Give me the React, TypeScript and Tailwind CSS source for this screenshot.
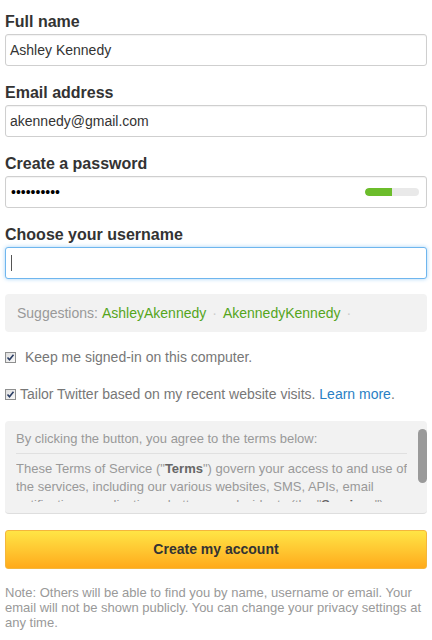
import React from 'react'

const font = { fontFamily: '"Liberation Sans", Arial, sans-serif' }

function Label({ children, className = '' }: { children: React.ReactNode; className?: string }) {
  return (
    <div className={`mb-[4px] text-[16px] font-bold leading-[17px] text-[#333] ${className}`}>
      {children}
    </div>
  )
}

function Field({ children, focused = false }: { children: React.ReactNode; focused?: boolean }) {
  return (
    <div
      className={
        focused
          ? 'flex h-[32px] items-center rounded-[3px] border border-[#6fb6ee] bg-white pl-[4px] pr-[7px] shadow-[0_0_4px_#a6d3f7] text-[14px] text-[#333]'
          : 'flex h-[32px] items-center rounded-[3px] border border-[#cfcfcf] bg-white pl-[4px] pr-[7px] shadow-[inset_0_1px_1px_rgba(0,0,0,0.05)] text-[14px] text-[#333]'
      }
    >
      {children}
    </div>
  )
}

function CheckIcon() {
  return (
    <svg width="11" height="11" viewBox="0 0 11 11" className="shrink-0">
      <defs>
        <linearGradient id="cb" x1="0" y1="0" x2="1" y2="1">
          <stop offset="0" stopColor="#dcdcdc" />
          <stop offset="1" stopColor="#fbfbfb" />
        </linearGradient>
      </defs>
      <rect x="0.5" y="0.5" width="10" height="10" fill="url(#cb)" stroke="#8e8f8f" />
      <path d="M2.5 5.5 L4.5 7.8 L8.5 2.8" fill="none" stroke="#2a3d64" strokeWidth="1.6" />
    </svg>
  )
}

export default function App() {
  return (
    <div className="w-[432px] bg-white px-[5px] pt-[13px] pb-[10px]" style={font}>
      <Label>Full name</Label>
      <Field>Ashley Kennedy</Field>

      <Label className="mt-[18px]">Email address</Label>
      <Field>akennedy@gmail.com</Field>

      <Label className="mt-[18px]">Create a password</Label>
      <Field>
        <span className="flex-1 pl-[1px] text-[14px] text-black">••••••••••</span>
        <div className="h-[8px] w-[54px] overflow-hidden rounded-full bg-[#e9e9e9]">
          <div className="h-full w-[27px] rounded-l-full bg-[#6cbd2b]" />
        </div>
      </Field>

      <Label className="mt-[18px]">Choose your username</Label>
      <Field focused>
        <span className="ml-[1px] h-[16px] w-[1px] bg-[#555]" />
      </Field>

      <div className="mt-[15px] flex h-[38px] items-center rounded-[4px] bg-[#f2f2f2] pl-[12px] text-[14px] text-[#999]">
        <span>Suggestions:</span>
        <span className="ml-[4px] text-[#55a51c]">AshleyAkennedy</span>
        <span className="mx-[6px] text-[#ccc]">·</span>
        <span className="text-[#55a51c]">AkennedyKennedy</span>
        <span className="ml-[6px] text-[#ccc]">·</span>
      </div>

      <label className="mt-[16px] flex h-[18px] items-center text-[14px] text-[#777]">
        <CheckIcon />
        <span className="ml-[9px]">Keep me signed-in on this computer.</span>
      </label>

      <label className="mt-[19px] flex h-[18px] items-center text-[14px] text-[#777]">
        <CheckIcon />
        <span className="ml-[4px]">
          Tailor Twitter based on my recent website visits.{' '}
          <a className="text-[#2a7fc4]">Learn more</a>.
        </span>
      </label>

      <div className="relative mt-[18px] h-[93px] rounded-[4px] border-b border-[#dedede] bg-[#f2f2f2] pt-[9px] pr-[20px] pb-[9px] pl-[11px] text-[13px] leading-[18px] text-[#999]">
        <div className="h-[72px] overflow-hidden">
          <p>By clicking the button, you agree to the terms below:</p>
          <div className="mt-[5px] mb-[6px] border-t border-[#e0e0e0]" />
          <p>
            These Terms of Service ("<b className="text-[#666]">Terms</b>") govern your access to and use of
            the services, including our various websites, SMS, APIs, email notifications, applications,
            buttons, and widgets (the "<b className="text-[#666]">Services</b>")
          </p>
        </div>
        <div className="absolute top-[8px] right-[0px] h-[54px] w-[9px] rounded-full bg-[#9a9a9a]" />
      </div>

      <button className="mt-[16px] flex h-[39px] w-full items-center justify-center rounded-[3px] border border-[#f4b63c] bg-gradient-to-b from-[#ffe545] to-[#ffaa19] text-[14px] font-bold text-[#333]">
        Create my account
      </button>

      <p className="mt-[16px] text-[13px] leading-[15px] text-[#999]">
        Note: Others will be able to find you by name, username or email. Your email will not be shown
        publicly. You can change your privacy settings at any time.
      </p>
    </div>
  )
}
